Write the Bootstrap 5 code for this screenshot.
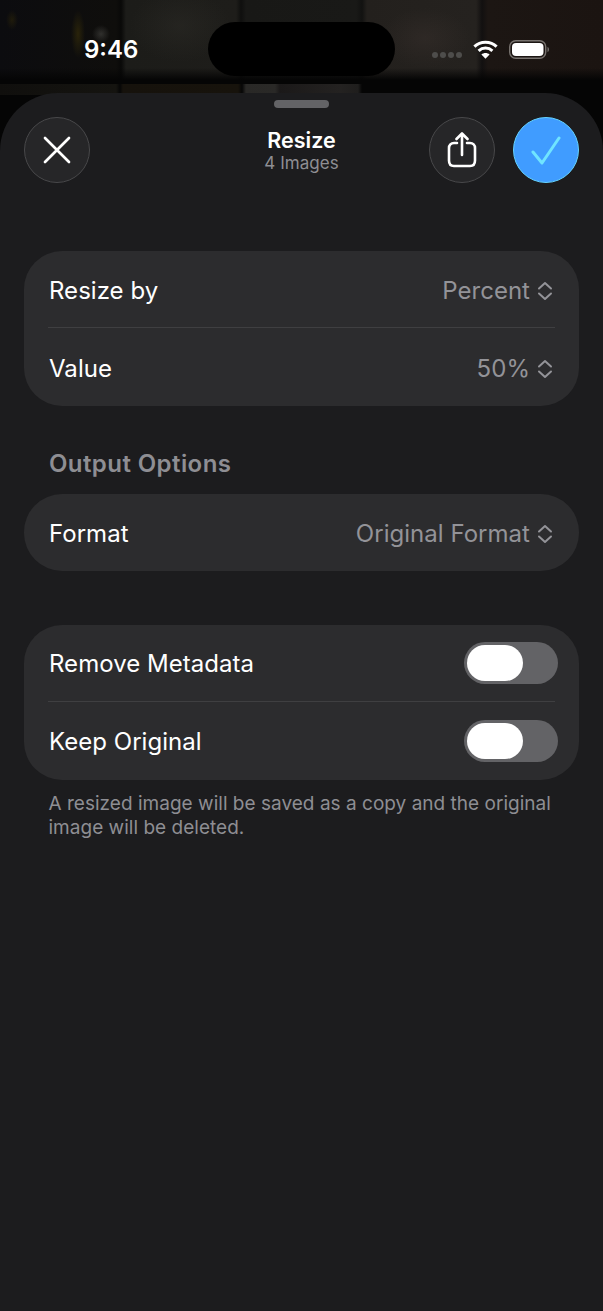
<!DOCTYPE html>
<html lang="en">
<head>
    <meta charset="UTF-8">
    <meta name="viewport" content="width=device-width, initial-scale=1.0">
    <title>Resize</title>
    <link href="https://cdn.jsdelivr.net/npm/bootstrap@5.3.0/dist/css/bootstrap.min.css" rel="stylesheet">
    <style>
        html, body {
            height: 100%;
        }
        body {
            font-family: Inter, "Liberation Sans", sans-serif;
            color: #fff;
            overflow: hidden;
            background-color: #050505;
            background-image:
                radial-gradient(ellipse 7px 24px at 78px 34px, rgba(60,50,8,.6), rgba(60,50,8,0)),
                radial-gradient(ellipse 6px 10px at 12px 20px, rgba(50,42,8,.5), rgba(50,42,8,0)),
                radial-gradient(circle 9px at 101px 34px, rgba(110,110,105,.35), rgba(110,110,105,0)),
                radial-gradient(ellipse 50px 36px at 180px 26px, rgba(60,58,52,.25), rgba(60,58,52,0)),
                radial-gradient(ellipse 45px 30px at 425px 38px, rgba(75,62,58,.25), rgba(75,62,58,0)),
                linear-gradient(180deg, rgba(5,5,5,0) 68px, #050505 80px),
                linear-gradient(90deg, #0c0c0f 0, #0f0e0c 116px, #090908 121px, #1c1c19 126px, #1e1d1a 236px, #0f0f0e 241px, #181816 246px, #191917 356px, #121211 362px, #23201d 367px, #25221f 476px, #121010 482px, #1c1613 488px, #1b1411 603px),
                linear-gradient(90deg, #100f0d 0, #151410 116px, #060606 120px, #16120c 123px, #17130c 238px, #060606 242px, #292826 246px, #2a2927 275px, #1b1919 280px, #242221 340px, #1f1e1d 358px, #050505 362px);
            background-size: 100% 84px, 100% 84px, 100% 84px, 100% 84px, 100% 84px, 100% 84px, 100% 84px, 100% 12px;
            background-position: 0 0, 0 0, 0 0, 0 0, 0 0, 0 0, 0 0, 0 83px;
            background-repeat: no-repeat;
        }
        .phone-screen {
            height: 100%;
        }
        .status-row {
            height: 93px;
            padding: 22px 0 0 84px;
        }
        .status-time {
            width: 124px;
            font-size: 24px;
            font-weight: 600;
            line-height: 54px;
            margin-top: 1px;
        }
        .island {
            width: 187px;
            height: 54px;
            background: #000;
            border-radius: 27px;
        }
        .status-icons {
            margin-left: 37px;
            height: 54px;
        }
        .signal-dots {
            gap: 2px;
            margin: 12px 11px 0 0;
        }
        .signal-dot {
            width: 6px;
            height: 6px;
            border-radius: 50%;
            background: #4e4d4b;
        }
        .battery-icon {
            margin-left: 11px;
        }
        .sheet {
            background: #1c1c1e;
            border-radius: 58px 58px 0 0;
            padding: 7px 24px 0;
        }
        .grabber {
            width: 55px;
            height: 8px;
            border-radius: 4px;
            background: #636366;
        }
        .sheet-head {
            margin-top: 9px;
            margin-bottom: 68px;
        }
        .head-actions {
            gap: 18px;
        }
        .round-btn {
            width: 66px;
            height: 66px;
            padding: 0;
            border-radius: 50%;
            border: 1px solid #48484a;
            background: #262628;
        }
        .round-btn.is-done {
            background: #409cff;
            border-color: #64d2ff;
        }
        .head-title {
            font-size: 21.5px;
            font-weight: 600;
            line-height: 26px;
            margin-top: 1px;
        }
        .head-sub {
            font-size: 17px;
            line-height: 21px;
            letter-spacing: .03px;
            color: #8e8e93;
        }
        .group-box {
            background: #2c2c2e;
            border-radius: 38px;
            padding: 0 24px;
        }
        .group-gap {
            margin-top: 54px;
        }
        .group-row {
            height: 76px;
            font-size: 24px;
            letter-spacing: .03px;
        }
        .group-row + .group-row {
            height: 79px;
            border-top: 1px solid #3f3f41;
        }
        .group-row.is-single {
            height: 77px;
        }
        .row-label {
            margin-left: 1px;
            margin-top: 2px;
        }
        .row-value {
            color: #939398;
            margin-top: 2px;
            gap: 7px;
        }
        .group-low .row-label,
        .group-low .row-value {
            margin-top: 4px;
        }
        .row-chevrons {
            margin-right: 2px;
        }
        .section-label {
            font-size: 24px;
            font-weight: 600;
            letter-spacing: .42px;
            color: #8e8e93;
            line-height: 30px;
            margin: 43px 0 15px 25px;
        }
        .pill-switch {
            width: 94px;
            height: 42px;
            margin-right: -3px;
            padding: 3px;
            border-radius: 21px;
            background: #636366;
        }
        .pill-knob {
            width: 56px;
            height: 36px;
            border-radius: 18px;
            background: #fff;
        }
        .foot-note {
            font-size: 19px;
            line-height: 24px;
            letter-spacing: .02px;
            color: #8e8e93;
            margin: 12px 24px 0 24.5px;
        }
    </style>
</head>
<body>
    <div class="phone-screen d-flex flex-column">
        <!-- status bar -->
        <div class="status-row d-flex align-items-start flex-shrink-0">
            <div class="status-time">9:46</div>
            <div class="island"></div>
            <div class="status-icons d-flex align-items-center">
                <div class="signal-dots d-flex">
                    <span class="signal-dot"></span><span class="signal-dot"></span><span class="signal-dot"></span><span class="signal-dot"></span>
                </div>
                <svg width="25" height="19" viewBox="0 0 25 19" fill="none" stroke="#fff" stroke-width="3">
                    <path d="M1.4 6.6C7.4 .8 17.6 .8 23.6 6.6"/>
                    <path d="M5.6 10.8C9.5 7.2 15.5 7.2 19.4 10.8"/>
                    <path d="M12.5 18.8L8.4 14.6C10.8 12.6 14.2 12.6 16.6 14.6Z" fill="#fff" stroke="none"/>
                </svg>
                <svg class="battery-icon" width="41" height="19" viewBox="0 0 41 19">
                    <rect x=".7" y=".7" width="36" height="17.6" rx="6" fill="none" stroke="#77726e" stroke-width="1.4"/>
                    <rect x="3" y="3" width="31.5" height="13" rx="4" fill="#fff"/>
                    <path d="M38.5 7C40.5 7.5 40.5 11.5 38.5 12Z" fill="#77726e"/>
                </svg>
            </div>
        </div>

        <div class="sheet flex-grow-1">
            <div class="grabber mx-auto"></div>

            <div class="sheet-head d-flex align-items-center justify-content-between position-relative">
                <button class="round-btn d-flex align-items-center justify-content-center" type="button">
                    <svg width="28" height="28" viewBox="0 0 28 28"><path d="M2 2L26 26M26 2L2 26" stroke="#fff" stroke-width="2.7" stroke-linecap="round"/></svg>
                </button>
                <div class="text-center position-absolute top-50 start-50 translate-middle">
                    <div class="head-title">Resize</div>
                    <div class="head-sub">4 Images</div>
                </div>
                <div class="head-actions d-flex">
                    <button class="round-btn d-flex align-items-center justify-content-center" type="button">
                        <svg width="30" height="36" viewBox="0 0 30 36" fill="none" stroke="#fff" stroke-width="2.6" stroke-linecap="round" stroke-linejoin="round">
                            <path d="M15 23V1.5M9.5 7L15 1.5L20.5 7"/>
                            <path d="M10 11H7C4 11 2 13 2 16V28.5C2 32 4 34 7 34H23C26 34 28 32 28 28.5V16C28 13 26 11 23 11H20"/>
                        </svg>
                    </button>
                    <button class="round-btn is-done d-flex align-items-center justify-content-center" type="button">
                        <svg width="30" height="30" viewBox="0 0 30 30" fill="none" stroke="#70e4ff" stroke-width="3" stroke-linecap="round" stroke-linejoin="round"><path d="M2 17L11 28L28 3"/></svg>
                    </button>
                </div>
            </div>

            <div class="group-box group-low">
                <div class="group-row d-flex align-items-center justify-content-between">
                    <span class="row-label">Resize by</span>
                    <span class="row-value d-flex align-items-center">Percent
                        <svg class="row-chevrons" width="16" height="20" viewBox="0 0 16 20" fill="none" stroke="#939398" stroke-width="2" stroke-linecap="round" stroke-linejoin="round"><path d="M2 7.5L8 2L14 7.5M2 12.5L8 18L14 12.5"/></svg>
                    </span>
                </div>
                <div class="group-row d-flex align-items-center justify-content-between">
                    <span class="row-label">Value</span>
                    <span class="row-value d-flex align-items-center">50%
                        <svg class="row-chevrons" width="16" height="20" viewBox="0 0 16 20" fill="none" stroke="#939398" stroke-width="2" stroke-linecap="round" stroke-linejoin="round"><path d="M2 7.5L8 2L14 7.5M2 12.5L8 18L14 12.5"/></svg>
                    </span>
                </div>
            </div>

            <div class="section-label">Output Options</div>

            <div class="group-box">
                <div class="group-row is-single d-flex align-items-center justify-content-between">
                    <span class="row-label">Format</span>
                    <span class="row-value d-flex align-items-center">Original Format
                        <svg class="row-chevrons" width="16" height="20" viewBox="0 0 16 20" fill="none" stroke="#939398" stroke-width="2" stroke-linecap="round" stroke-linejoin="round"><path d="M2 7.5L8 2L14 7.5M2 12.5L8 18L14 12.5"/></svg>
                    </span>
                </div>
            </div>

            <div class="group-box group-gap">
                <div class="group-row d-flex align-items-center justify-content-between">
                    <span class="row-label">Remove Metadata</span>
                    <div class="pill-switch"><div class="pill-knob"></div></div>
                </div>
                <div class="group-row d-flex align-items-center justify-content-between">
                    <span class="row-label">Keep Original</span>
                    <div class="pill-switch"><div class="pill-knob"></div></div>
                </div>
            </div>

            <p class="foot-note">A resized image will be saved as a copy and the original image will be deleted.</p>
        </div>
    </div>
</body>
</html>
